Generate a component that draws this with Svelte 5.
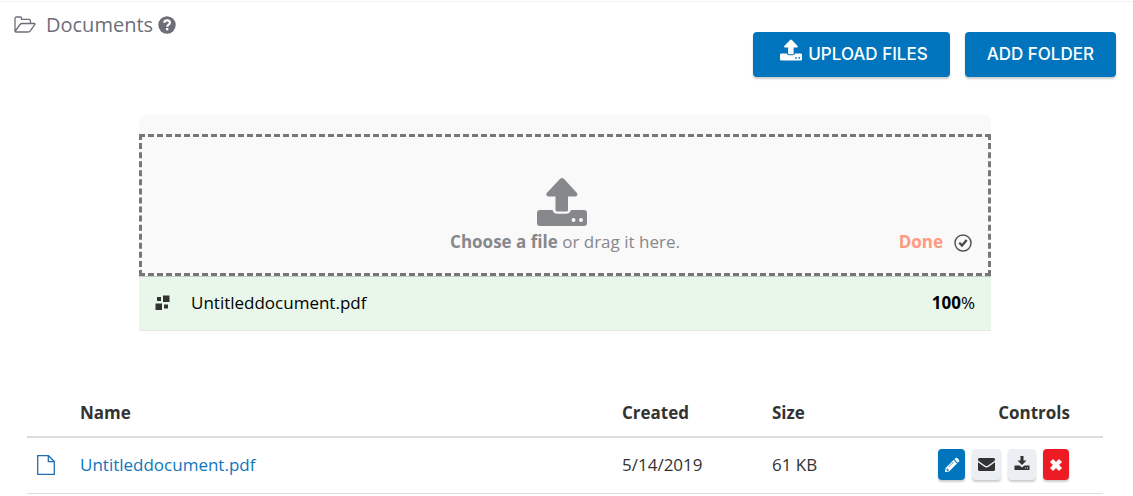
<script>
  let files = $state([
    { name: 'Untitleddocument.pdf', created: '5/14/2019', size: '61 KB', progress: 100 },
  ]);

  let picker;

  function remove(file) {
    files = files.filter((f) => f !== file);
  }
</script>

{#snippet uploadIcon(size)}
  <svg width={size} height={size} viewBox="0 0 50 50" fill="currentColor" aria-hidden="true">
    <path d="M22.9 2a3 3 0 0 1 4.200 0L39.500 15.500c1.800 1.900.8 3.900-1.600 3.900H31V33q0 1.500-1.500 1.500h-9.500q-1.500 0-1.500-1.500V19.400h-6.700c-2.400 0-3.400-2-1.600-3.900Z" />
    <path fill-rule="evenodd" d="M3 33h12.500c1 2.700 2.500 3.800 5 3.800h8.500c2.500 0 4-1.100 5-3.800H47a3 3 0 0 1 3 3v10a3 3 0 0 1-3 3H3a3 3 0 0 1-3-3V36a3 3 0 0 1 3-3Zm33.500 8a2 2 0 1 0 0 4 2 2 0 0 0 0-4Zm7.500 0a2 2 0 1 0 0 4 2 2 0 0 0 0-4Z" />
  </svg>
{/snippet}

<main>
  <header>
    <h1>
      <svg width="22" height="18" viewBox="0 0 22 18" fill="none" stroke="currentColor" stroke-width="1.300" stroke-linejoin="round" aria-hidden="true">
        <path d="M1 15V2.500Q1 1 2.500 1H6.200Q7.500 1 7.500 2.300V3.400H15Q16.500 3.400 16.500 5V7.500M1 15.500 6 8.500Q6.700 7.500 8 7.500H20.200Q21.500 7.500 20.700 8.700L16.300 14.800Q15.500 16 14 16H2Q1 16 1 15" />
      </svg>
      Documents
      <svg width="18" height="18" viewBox="0 0 18 18" role="img" aria-label="Help">
        <circle cx="9" cy="9" r="8.700" fill="currentColor" />
        <path d="M6.200 6.700C6.500 5 7.600 4.300 9 4.300c1.700 0 2.900 1 2.900 2.400C11.900 8.600 9.200 8.600 9.200 10.700" fill="none" stroke="#fff" stroke-width="2.200" />
        <rect x="8" y="12" width="2.300" height="2.300" fill="#fff" />
      </svg>
    </h1>
    <div class="actions">
      <button class="primary upload" onclick={() => picker.click()}>
        {@render uploadIcon(22)} UPLOAD FILES
      </button>
      <button class="primary">ADD FOLDER</button>
    </div>
  </header>

  <section class="uploader">
    <div class="dropzone">
      <label class="choose">
        <span class="big">{@render uploadIcon(50)}</span>
        <span><strong>Choose a file</strong> or drag it here.</span>
        <input type="file" multiple bind:this={picker} />
      </label>
      <div class="status">
        <span>Done</span>
        <svg width="18" height="20" viewBox="0 -2 18 20" fill="none" stroke="#555" aria-hidden="true">
          <circle cx="9" cy="9" r="8" stroke-width="1.500" />
          <path d="M5.300 8.800 8 11.500 12.700 6" stroke="#444" stroke-width="2.300" />
        </svg>
      </div>
    </div>
    {#each files as file}
      <div class="progress">
        <svg width="15" height="15" viewBox="0 0 15 15" fill="#333" aria-hidden="true">
          <path d="M2 2h4v4H2zM8 0.500h6.500V7H8zM0.500 8.500H7V15H0.500zM9 9.500h4v4H9z" />
        </svg>
        <span class="filename">{file.name}</span>
        <span><strong>{file.progress}</strong>%</span>
      </div>
    {/each}
  </section>

  <table>
    <thead>
      <tr>
        <th class="type"></th>
        <th>Name</th>
        <th class="created">Created</th>
        <th class="size">Size</th>
        <th class="controls">Controls</th>
      </tr>
    </thead>
    <tbody>
      {#each files as file}
        <tr>
          <td class="type">
            <svg width="18" height="20" viewBox="0 0 18 20" fill="none" stroke="#1f6fb2" stroke-width="1.300" aria-hidden="true">
              <path d="M0.700 0.700H11.500L17.300 6.500V19.300H0.700ZM11.300 0.700V6.700H17.300" />
            </svg>
          </td>
          <td><a href="#{file.name}">{file.name}</a></td>
          <td>{file.created}</td>
          <td>{file.size}</td>
          <td class="controls">
            <div class="tools">
              <button class="edit" aria-label="Edit">
                <svg width="16" height="16" viewBox="0 0 17 17" fill="currentColor" aria-hidden="true">
                  <path fill-rule="evenodd" d="M11 2.500 12.400 1.100Q13.200.4 14 1.100L16 3.100Q16.700 3.900 16 4.700L14.600 6.100ZM10.200 3.300 13.800 6.900 5.400 15.300 1 16 1.700 11.800ZM3 12.300 2.600 14.200 3.300 14.800 5 14.400V13.300H3.900V12.300ZM10 5.100 4.500 10.600 4.900 11 10.400 5.500Z" />
                </svg>
              </button>
              <button class="email" aria-label="Email">
                <svg width="17" height="13" viewBox="0 0 17 13" fill="currentColor" aria-hidden="true">
                  <path d="M1.500 0h14Q17 0 17 1.400 17 2.600 15.700 3.500L10 7.600Q8.500 8.600 7 7.600L1.300 3.500Q0 2.600 0 1.400 0 0 1.500 0ZM0 4.300 6.300 8.800Q8.500 10.200 10.700 8.800L17 4.300V11.500Q17 13 15.500 13h-14Q0 13 0 11.500Z" />
                </svg>
              </button>
              <button aria-label="Download">
                <svg width="16" height="20" viewBox="0 0 16 20" fill="currentColor" aria-hidden="true">
                  <path d="M6.500 1h3v4.500H12.500L8 10 3.500 5.500h3Z" />
                  <path fill-rule="evenodd" d="M.5 10.500H5.500L8 12.500 10.500 10.500H15.500V15H.5ZM11 12.500v1h1v-1ZM13 12.500v1h1v-1Z" />
                </svg>
              </button>
              <button class="delete" aria-label="Delete" onclick={() => remove(file)}>
                <svg width="12" height="12" viewBox="0 0 12 12" fill="currentColor" aria-hidden="true">
                  <path d="M3 .5 6 3.500 9 .5 11.500 3 8.500 6 11.500 9 9 11.500 6 8.500 3 11.500 .5 9 3.500 6 .5 3Z" stroke="currentColor" stroke-linejoin="round" />
                </svg>
              </button>
            </div>
          </td>
        </tr>
      {/each}
    </tbody>
  </table>
</main>

<style>
  :global(body) {
    margin: 0;
    background: #fff;
  }

  main {
    border-top: 1px solid #f3f3f3;
    margin-top: 1px;
    font-family: "Open Sans", sans-serif;
    font-size: 17px;
    line-height: 24px;
    color: #333;
  }

  svg {
    display: block;
    flex-shrink: 0;
  }

  header {
    display: flex;
    justify-content: space-between;
    padding: 0 17px 0 14px;
  }

  h1 {
    display: flex;
    align-items: center;
    gap: 5px;
    margin: 9px 0 0;
    height: 28px;
    font-size: 20px;
    font-weight: 400;
    color: #6d6e78;
  }

  h1 svg:first-child {
    margin-right: 5px;
  }

  .actions {
    display: flex;
    gap: 15px;
    margin-top: 30px;
  }

  button {
    font: inherit;
    border: 0;
    border-radius: 4px;
    box-shadow: 0 2px 2px rgba(0, 0, 0, 0.2);
    cursor: pointer;
  }

  .primary {
    display: flex;
    align-items: center;
    gap: 6px;
    height: 45px;
    padding: 0 22px 2px;
    background: #0075be;
    color: #fff;
    font-family: Inter, sans-serif;
    font-weight: 500;
  }

  .upload {
    padding-left: 27px;
  }

  .upload :global(svg) {
    margin-bottom: 8px;
  }

  .uploader {
    margin: 38px 142px 0 139px;
    padding-top: 19px;
    border-radius: 6px 6px 0 0;
    background: #f9f9f9;
  }

  .dropzone {
    display: grid;
    grid-template-columns: 1fr auto 1fr;
    align-items: end;
    padding: 40px 16px 19px;
    border: 3px dashed #777;
  }

  .choose {
    grid-column: 2;
    display: flex;
    flex-direction: column;
    align-items: center;
    color: #87888c;
    cursor: pointer;
  }

  .big {
    margin-right: 6px;
    margin-bottom: 3px;
  }

  .choose input {
    position: absolute;
    width: 1px;
    height: 1px;
    opacity: 0;
  }

  .status {
    display: flex;
    align-items: center;
    justify-content: flex-end;
    gap: 11px;
    color: #ff9980;
    font-weight: 700;
  }

  .progress {
    display: flex;
    align-items: center;
    gap: 21px;
    height: 51px;
    padding: 0 16px 2px;
    border-top: 1px solid #c5c8c5;
    border-bottom: 1px solid #e3e6e3;
    background: #e9f7ea;
    color: #000;
  }

  .filename {
    flex: 1;
  }

  table {
    width: calc(100% - 57px);
    margin: 59px 30px 0 27px;
    border-collapse: collapse;
    table-layout: fixed;
  }

  th,
  td {
    padding: 0 8px;
    text-align: left;
  }

  th {
    height: 46px;
    border-bottom: 2px solid #ddd;
    font-weight: 700;
  }

  td {
    height: 53px;
    padding-bottom: 2px;
    border-bottom: 1px solid #ddd;
  }

  .type {
    width: 27px;
    padding-left: 10px;
  }

  .created,
  .size {
    width: 134px;
  }

  .controls {
    width: 148px;
    padding-right: 33px;
    text-align: right;
  }

  td.controls {
    padding-right: 34px;
  }

  a {
    color: #0f75bd;
    text-decoration: none;
  }

  .tools {
    display: flex;
    justify-content: flex-end;
    gap: 7px;
  }

  .tools button {
    display: flex;
    align-items: center;
    justify-content: center;
    width: 28px;
    height: 31px;
    padding: 0;
    background: #ebeef2;
    color: #333;
  }

  .tools .edit {
    width: 27px;
    background: #0075be;
    color: #fff;
  }

  .tools .email {
    width: 29px;
  }

  .tools .delete {
    width: 26px;
    background: #ed1c24;
    color: #fff;
  }
</style>
